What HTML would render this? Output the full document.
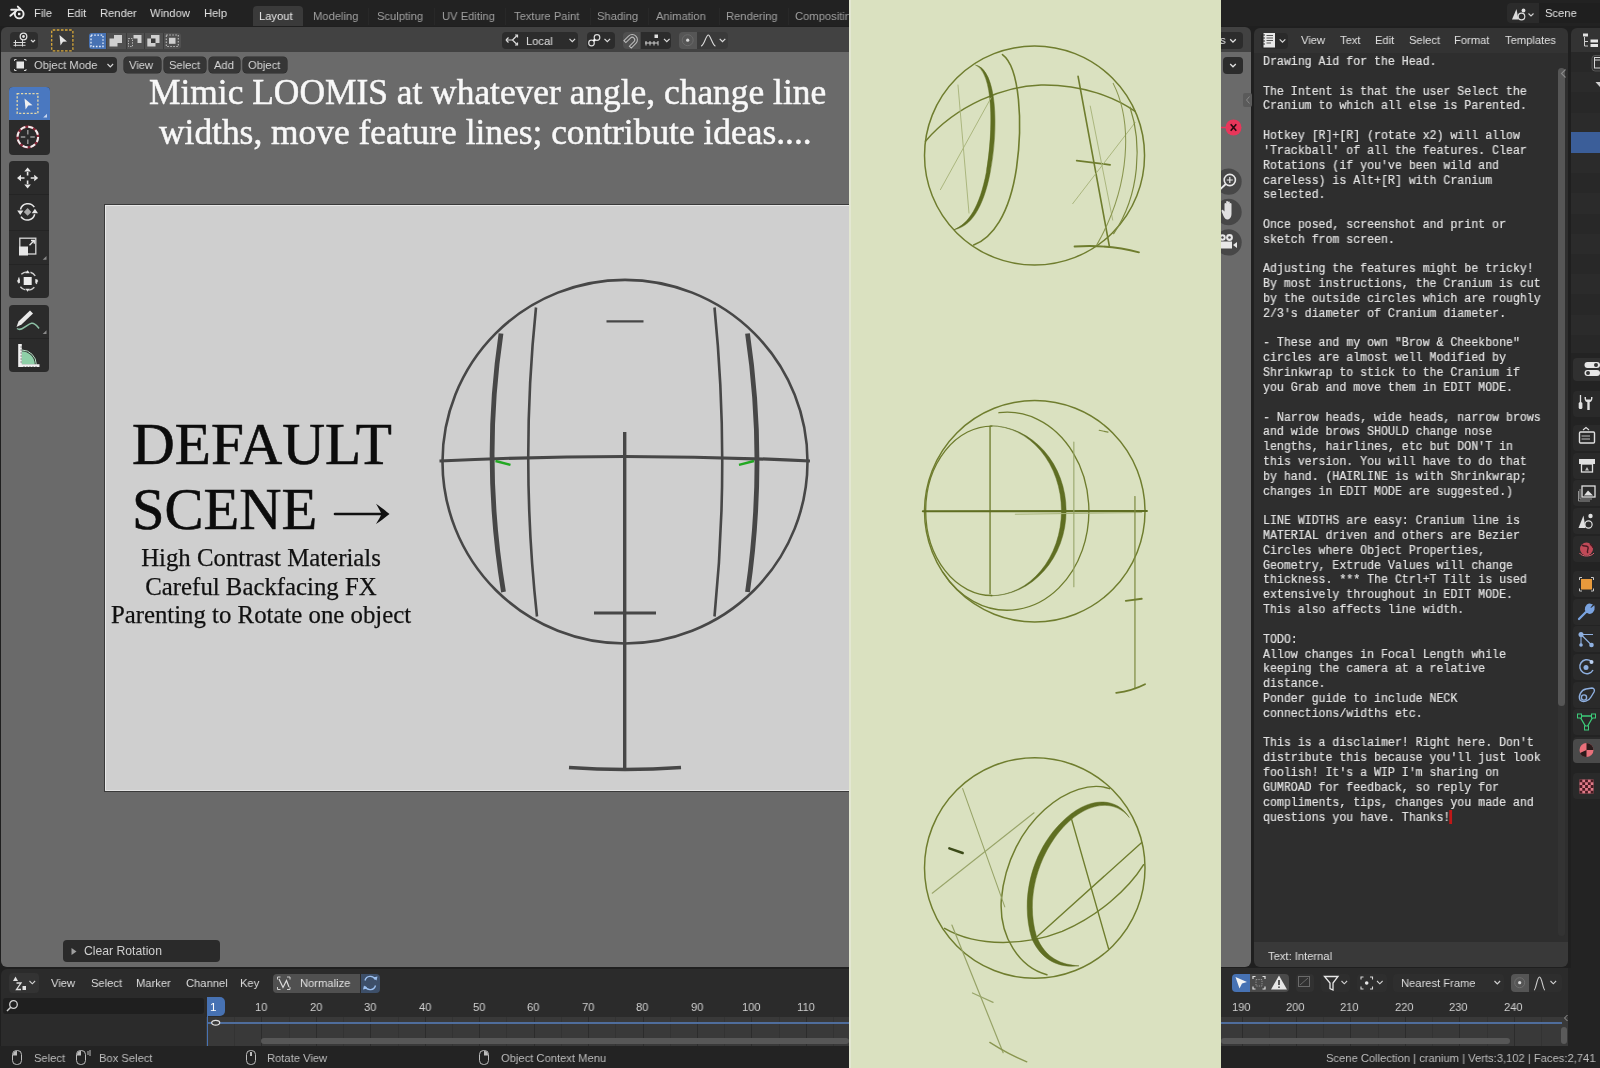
<!DOCTYPE html>
<html><head><meta charset="utf-8">
<style>
*{margin:0;padding:0;box-sizing:border-box}
html,body{width:1600px;height:1068px;overflow:hidden;background:#1f1f1f;font-family:"Liberation Sans",sans-serif;position:relative}
.a{position:absolute}
.t{position:absolute;white-space:pre;will-change:transform;color:#d8d8d8;font-size:11.5px;line-height:14px}
</style></head><body>
<!-- top bar -->
<div class="a" id="topbar" style="left:0;top:0;width:1600px;height:26px;background:#222222"></div>
<svg class="a" style="left:5px;top:2px" width="25" height="20" viewBox="5 2 25 20">
<circle cx="19.2" cy="14" r="4.4" fill="none" stroke="#ececec" stroke-width="1.9"/>
<rect x="18" y="12.8" width="2.4" height="2.4" fill="#ececec"/>
<path d="M11.2 9.7 L19.5 9.5 M17.8 6.6 L20.5 9.2 M10.4 15.8 L15.8 11.3" stroke="#ececec" stroke-width="1.9" stroke-linecap="round" fill="none"/>
</svg>
<div class="t" style="left:34px;top:5.71px;font-size:11.8px;transform:scaleX(0.949);transform-origin:0 0;color:#e2e2e2;">File</div>
<div class="t" style="left:66.5px;top:5.71px;font-size:11.8px;transform:scaleX(0.949);transform-origin:0 0;color:#e2e2e2;">Edit</div>
<div class="t" style="left:100.3px;top:5.71px;font-size:11.8px;transform:scaleX(0.949);transform-origin:0 0;color:#e2e2e2;">Render</div>
<div class="t" style="left:150px;top:5.71px;font-size:11.8px;transform:scaleX(0.949);transform-origin:0 0;color:#e2e2e2;">Window</div>
<div class="t" style="left:204.2px;top:5.71px;font-size:11.8px;transform:scaleX(0.949);transform-origin:0 0;color:#e2e2e2;">Help</div>
<div class="a" style="left:253px;top:6px;width:50px;height:20px;background:#3a3a3a;border-radius:4px 4px 0 0"></div>
<div class="t" style="left:259.3px;top:8.91px;font-size:11.8px;transform:scaleX(0.949);transform-origin:0 0;color:#e8e8e8;">Layout</div>
<div class="t" style="left:312.8px;top:8.91px;font-size:11.8px;transform:scaleX(0.949);transform-origin:0 0;color:#a0a0a0;">Modeling</div>
<div class="t" style="left:377px;top:8.91px;font-size:11.8px;transform:scaleX(0.949);transform-origin:0 0;color:#a0a0a0;">Sculpting</div>
<div class="t" style="left:442px;top:8.91px;font-size:11.8px;transform:scaleX(0.949);transform-origin:0 0;color:#a0a0a0;">UV Editing</div>
<div class="t" style="left:513.8px;top:8.91px;font-size:11.8px;transform:scaleX(0.949);transform-origin:0 0;color:#a0a0a0;">Texture Paint</div>
<div class="t" style="left:597.4px;top:8.91px;font-size:11.8px;transform:scaleX(0.949);transform-origin:0 0;color:#a0a0a0;">Shading</div>
<div class="t" style="left:656px;top:8.91px;font-size:11.8px;transform:scaleX(0.949);transform-origin:0 0;color:#a0a0a0;">Animation</div>
<div class="t" style="left:726.3px;top:8.91px;font-size:11.8px;transform:scaleX(0.949);transform-origin:0 0;color:#a0a0a0;">Rendering</div>
<div class="t" style="left:795.3px;top:8.91px;font-size:11.8px;transform:scaleX(0.949);transform-origin:0 0;color:#a0a0a0;">Compositing</div>
<div class="a" style="left:368px;top:8px;width:1px;height:17px;background:#282828"></div>
<div class="a" style="left:434px;top:8px;width:1px;height:17px;background:#282828"></div>
<div class="a" style="left:504.7px;top:8px;width:1px;height:17px;background:#282828"></div>
<div class="a" style="left:589.7px;top:8px;width:1px;height:17px;background:#282828"></div>
<div class="a" style="left:648px;top:8px;width:1px;height:17px;background:#282828"></div>
<div class="a" style="left:718.5px;top:8px;width:1px;height:17px;background:#282828"></div>
<div class="a" style="left:787.5px;top:8px;width:1px;height:17px;background:#282828"></div>
<div class="a" style="left:1507.4px;top:3px;width:31.60px;height:19.50px;background:#2b2b2b;border-radius:4px 0 0 4px"></div>
<div class="a" style="left:1539.3px;top:3px;width:60.70px;height:19.50px;background:#1f1f1f;"></div>
<div class="t" style="left:1544.5px;top:5.81px;font-size:11.8px;transform:scaleX(0.949);transform-origin:0 0;color:#e6e6e6;">Scene</div>
<svg class="a" style="left:1508px;top:3px" width="32" height="20" viewBox="1508 3 32 20">
<path d="M1512 19.5 L1516.5 9 L1518.5 19.5 Z" fill="#dcdcdc"/>
<circle cx="1523.5" cy="10.5" r="1.9" fill="#dcdcdc"/>
<circle cx="1521.5" cy="16.5" r="3.3" fill="#2b2b2b" stroke="#dcdcdc" stroke-width="1.2"/>
<path d="M1528.5 13.5 L1531 16 L1533.5 13.5" fill="none" stroke="#d0d0d0" stroke-width="1.1"/>
</svg>
<!-- viewport header -->
<div class="a" style="left:1px;top:27px;width:848px;height:25px;background:#424242;border-radius:6px 0 0 0"></div>
<!-- viewport -->
<div class="a" style="left:1px;top:52px;width:848px;height:915px;background:#6a6a6a;border-radius:0 0 0 6px"></div>
<!-- camera frame -->
<div class="a" style="left:104px;top:204px;width:745px;height:588px;background:#cfcfcf;border:1px solid #3a3a3a;border-right:none"></div>

<!-- header items -->
<div class="a" style="left:9.5px;top:32px;width:28.50px;height:16.60px;background:#2e2e2e;border-radius:4px"></div>
<svg class="a" style="left:9px;top:31px" width="30" height="18" viewBox="9 31 30 18">
<circle cx="23.5" cy="36.5" r="3.3" fill="none" stroke="#e0e0e0" stroke-width="1.3"/>
<circle cx="23.5" cy="36.5" r="1.4" fill="#e0e0e0"/>
<path d="M13.5 42.5 H25.5 M15.5 40 V46.5 M22.5 40 V46.5 M13.5 45.3 H25.5" stroke="#d8d8d8" stroke-width="1"/>
<path d="M31 40 L33 42 L35 40" fill="none" stroke="#d8d8d8" stroke-width="1.2"/>
</svg>
<div class="a" style="left:51px;top:29.3px;width:22.60px;height:22.20px;background:#3a3a3a;border-radius:2px"></div>
<svg class="a" style="left:50px;top:28px" width="25" height="25" viewBox="50 28 25 25">
<rect x="51.7" y="30" width="21.2" height="20.8" fill="none" stroke="#d9a93a" stroke-width="1.3" stroke-dasharray="2.6 1.5" rx="1"/>
<path d="M59.5 35 L67 41.5 L63 41.8 L60.5 45.5 Z" fill="#e8e8e8"/>
</svg>
<div class="a" style="left:88.5px;top:32.5px;width:17.20px;height:16.70px;background:#4772b3;border-radius:3px 0 0 3px"></div>
<div class="a" style="left:106.5px;top:32.5px;width:74.50px;height:16.70px;background:#505050;border-radius:0 3px 3px 0"></div>
<div class="a" style="left:125.5px;top:32.5px;width:0.80px;height:16.70px;background:#3c3c3c;"></div>
<div class="a" style="left:144px;top:32.5px;width:0.80px;height:16.70px;background:#3c3c3c;"></div>
<div class="a" style="left:163px;top:32.5px;width:0.80px;height:16.70px;background:#3c3c3c;"></div>
<svg class="a" style="left:88px;top:32px" width="94" height="18" viewBox="88 32 94 18">
<rect x="91" y="35.2" width="12" height="11.3" fill="none" stroke="#e6eefc" stroke-width="1.3" stroke-dasharray="1.6 1.6"/>
<path d="M109.5 38.5 H114 V35 H122 V43 H117.5 V46.5 H109.5 Z" fill="#cfcfcf"/>
<path d="M128.5 38.5 H132.5 V46.5 H128.5 Z" fill="none" stroke="#bdbdbd" stroke-width="1" stroke-dasharray="1.3 1.3"/>
<path d="M133.5 35 H141.5 V43 H137.5 V38.5 H133.5 Z" fill="#d0d0d0"/>
<path d="M147.3 38.5 H151 V35 H159.5 V43 H155.5 V46.5 H147.3 Z" fill="#cfcfcf"/>
<rect x="151" y="38.5" width="4.5" height="4.5" fill="#3a3a3a"/>
<rect x="166.3" y="35" width="12" height="11.5" fill="none" stroke="#bdbdbd" stroke-width="1.1" stroke-dasharray="1.5 1.5"/>
<rect x="169" y="37.8" width="6.5" height="6" fill="#cfcfcf"/>
</svg>
<div class="a" style="left:501.7px;top:32px;width:76.60px;height:16.50px;background:#2c2c2c;border-radius:4px"></div>
<div class="t" style="left:526px;top:33.71px;font-size:11.8px;transform:scaleX(0.949);transform-origin:0 0;color:#e0e0e0;">Local</div>

<div class="a" style="left:586.5px;top:32px;width:28.50px;height:16.50px;background:#2c2c2c;border-radius:4px"></div>
<div class="a" style="left:623.2px;top:32px;width:17.30px;height:16.50px;background:#4f4f4f;border-radius:4px 0 0 4px"></div>
<div class="a" style="left:641.2px;top:32px;width:30.10px;height:16.50px;background:#2c2c2c;border-radius:0 4px 4px 0"></div>
<div class="a" style="left:678.8px;top:32px;width:18.00px;height:16.50px;background:#565656;border-radius:4px 0 0 4px"></div>
<div class="a" style="left:697px;top:32px;width:31.20px;height:16.50px;background:#3a3a3a;border-radius:0 4px 4px 0"></div>
<svg class="a" style="left:500px;top:31px" width="232" height="19" viewBox="500 31 232 19">
<g fill="none" stroke="#dcdcdc" stroke-width="1.2">
<path d="M506 40 L512.5 40 M512.5 40 L517 35.5 M512.5 40 L517 44.5"/>
<path d="M506 40 L508.5 37.5 M506 40 L508.5 42.5"/>
<path d="M515 35 H517.5 V37.5 M515 45 H517.5 V42.5"/>
<path d="M569.5 38.8 L572.3 41.6 L575.1 38.8"/>
<circle cx="591.5" cy="43" r="2.8"/><circle cx="597" cy="37.5" r="2.8"/>
<path d="M604.5 38.8 L607.3 41.6 L610.1 38.8"/>
<g transform="rotate(45 631.5 40.5)"><path d="M626.3 46 V39.5 A5.2 5.2 0 0 1 636.7 39.5 V46 H634 V39.5 A2.5 2.5 0 0 0 629 39.5 V46 Z" fill="none" stroke="#bdbdbd" stroke-width="1"/></g>
<path d="M664 38.8 L666.8 41.6 L669.6 38.8"/>
<path d="M719.7 38.8 L722.5 41.6 L725.3 38.8"/>
<path d="M701 46 C 704 46 706 35 708.3 35 C 710.6 35 712.6 46 715.5 46" stroke-width="1.1"/>
</g>
<circle cx="594.3" cy="40.2" r="1.2" fill="#ffffff"/>
<path d="M645 43 H658 M646 41 V45.5 M650 41 V45.5 M654 41 V45.5 M658 41 V45.5" stroke="#cfcfcf" stroke-width="1"/>
<rect x="654.5" y="34.5" width="3.5" height="3.5" fill="#e0e0e0"/>
<circle cx="687.7" cy="40.2" r="5.5" fill="none" stroke="#6a6a6a" stroke-width="1"/>
<circle cx="687.7" cy="40.2" r="1.6" fill="#d8d8d8"/>
</svg>
<div class="a" style="left:9.7px;top:57px;width:106.90px;height:16.40px;background:#2c2c2c;border-radius:4px"></div>
<svg class="a" style="left:12px;top:58px" width="110" height="15" viewBox="12 58 110 15">
<path d="M14.5 61 V59.5 H16.5 M24 59.5 H26 V61 M26 69 V70.5 H24 M16.5 70.5 H14.5 V69" fill="none" stroke="#cfcfcf" stroke-width="1"/>
<rect x="16.5" y="61.5" width="7.5" height="7" fill="#e6e6e6"/>
<path d="M107.5 64 L110.3 66.8 L113.1 64" fill="none" stroke="#d8d8d8" stroke-width="1.2"/>
</svg>
<div class="t" style="left:34px;top:57.99px;font-size:11.8px;transform:scaleX(0.949);transform-origin:0 0;color:#d8d8d8;">Object Mode</div>
<div class="a" style="left:124px;top:57px;width:36.70px;height:16.40px;background:#363636;box-shadow:0 0 0 0.6px #2a2a2a;border-radius:4px"></div>
<div class="t" style="left:129px;top:57.99px;font-size:11.8px;transform:scaleX(0.949);transform-origin:0 0;color:#d8d8d8;">View</div>
<div class="a" style="left:163.5px;top:57px;width:42.80px;height:16.40px;background:#363636;box-shadow:0 0 0 0.6px #2a2a2a;border-radius:4px"></div>
<div class="t" style="left:168.5px;top:57.99px;font-size:11.8px;transform:scaleX(0.949);transform-origin:0 0;color:#d8d8d8;">Select</div>
<div class="a" style="left:209px;top:57px;width:31.00px;height:16.40px;background:#363636;box-shadow:0 0 0 0.6px #2a2a2a;border-radius:4px"></div>
<div class="t" style="left:214px;top:57.99px;font-size:11.8px;transform:scaleX(0.949);transform-origin:0 0;color:#d8d8d8;">Add</div>
<div class="a" style="left:242.8px;top:57px;width:44.50px;height:16.40px;background:#363636;box-shadow:0 0 0 0.6px #2a2a2a;border-radius:4px"></div>
<div class="t" style="left:247.5px;top:57.99px;font-size:11.8px;transform:scaleX(0.949);transform-origin:0 0;color:#d8d8d8;">Object</div>
<!-- left toolbar -->
<div class="a" style="left:8.6px;top:86.5px;width:41px;height:68px;background:#2b2b2b;border-radius:4px"></div>
<div class="a" style="left:8.6px;top:86.5px;width:41px;height:33px;background:#4a78c0;border-radius:4px 4px 0 0"></div>
<div class="a" style="left:9px;top:161px;width:40px;height:137px;background:#2b2b2b;border-radius:4px"></div>
<div class="a" style="left:9px;top:194px;width:40px;height:1px;background:#242424"></div>
<div class="a" style="left:9px;top:229.5px;width:40px;height:1px;background:#242424"></div>
<div class="a" style="left:9px;top:264px;width:40px;height:1px;background:#242424"></div>
<div class="a" style="left:9px;top:304.5px;width:40px;height:67.5px;background:#2b2b2b;border-radius:4px"></div>
<div class="a" style="left:9px;top:337.5px;width:40px;height:1px;background:#242424"></div>
<svg class="a" style="left:0;top:80px" width="60" height="300" viewBox="0 80 60 300">
<!-- select box -->
<rect x="17.2" y="93.7" width="20.7" height="19.7" fill="none" stroke="#e6d9a8" stroke-width="1.3" stroke-dasharray="2.2 1.6"/>
<path d="M24.5 98.5 L32.5 105.3 L28.2 105.6 L25.6 109.5 Z" fill="#f0f0f0"/>
<path d="M43.2 117.5 L47 117.5 L47 113.7 Z" fill="#c8d6ee"/>
<!-- cursor -->
<circle cx="27.8" cy="137" r="10.3" fill="none" stroke="#8a2a3a" stroke-width="2.3"/>
<circle cx="27.8" cy="137" r="10.3" fill="none" stroke="#f0f0f0" stroke-width="2" stroke-dasharray="5.2 2.9"/>
<g stroke="#9a9a9a" stroke-width="1.4"><path d="M27.8 130 V134.5 M27.8 139.5 V144 M20.8 137 H25.3 M30.3 137 H34.8"/></g>
<!-- move -->
<g fill="#e6e6e6">
<path d="M27.6 167.5 L24.3 171.5 L30.9 171.5 Z M27.6 188.5 L24.3 184.5 L30.9 184.5 Z M17 178 L21 174.7 L21 181.3 Z M38.2 178 L34.2 174.7 L34.2 181.3 Z"/>
</g>
<g stroke="#e6e6e6" stroke-width="1.6"><path d="M27.6 172 V175.5 M27.6 180.5 V184 M21 178 H24.5 M30.7 178 H34.2"/></g>
<!-- rotate -->
<path d="M20.5 209.5 A 7.6 7.6 0 0 1 34.3 207.2" fill="none" stroke="#e6e6e6" stroke-width="1.5"/>
<path d="M34.7 214.3 A 7.6 7.6 0 0 1 21 216.6" fill="none" stroke="#e6e6e6" stroke-width="1.5"/>
<path d="M17.2 210.5 L23.4 210.5 L20.3 215 Z M31.8 213.2 L38 213.2 L34.9 208.7 Z" fill="#e6e6e6"/>
<path d="M27.6 208 L31.4 211.9 L27.6 215.8 L23.8 211.9 Z" fill="#a8a8a8"/>
<!-- scale -->
<rect x="19.8" y="238.2" width="16" height="15.8" fill="none" stroke="#d8d8d8" stroke-width="1.3"/>
<rect x="19" y="246.5" width="9" height="9" fill="#e6e6e6"/>
<path d="M29.5 245.3 L34 240.8 M31 240.5 H34.3 V243.8" fill="none" stroke="#e6e6e6" stroke-width="1.3"/>
<path d="M42.7 259.7 L46.5 259.7 L46.5 255.9 Z" fill="#8a8a8a"/>
<!-- transform -->
<circle cx="27.6" cy="281" r="9.2" fill="none" stroke="#cfcfcf" stroke-width="1.4" stroke-dasharray="6 3.8" stroke-dashoffset="3"/>
<rect x="23.7" y="277" width="8" height="8" fill="#ececec"/>
<path d="M27.6 270.2 L25.3 273.3 L29.9 273.3 Z M27.6 291.8 L25.3 288.7 L29.9 288.7 Z M16.8 281 L19.9 278.7 L19.9 283.3 Z M38.4 281 L35.3 278.7 L35.3 283.3 Z" fill="#e6e6e6"/>
<!-- annotate -->
<path d="M16.5 327 L18.5 321.5 L30 310.5 L33 313.5 L21.5 324.5 Z" fill="#eaeaea"/>
<path d="M17 328.5 C 22 332 27 324 31.5 323.3 C 35 322.7 37 326 39 328.5" fill="none" stroke="#8dc0a5" stroke-width="1.5"/>
<path d="M42.7 334 L46.5 334 L46.5 330.2 Z" fill="#8a8a8a"/>
<!-- measure -->
<path d="M21.5 364.5 L21.5 351.2 A 13.3 13.3 0 0 1 34.8 364.5 Z" fill="#8fd0a8"/>
<path d="M21.8 350 A 14.5 14.5 0 0 1 36.3 364.5" fill="none" stroke="#b8e0c6" stroke-width="1"/>
<path d="M18.2 344 H21.8 V364.2 H39.5 V367 H18.2 Z" fill="#f0f0f0"/>
<g stroke="#2b2b2b" stroke-width="0.6"><path d="M20.4 347 H21.8 M20.4 350 H21.8 M20.4 353 H21.8 M20.4 356 H21.8 M20.4 359 H21.8 M20.4 362 H21.8 M24 366 V367 M27 366 V367 M30 366 V367 M33 366 V367 M36 366 V367"/></g>
</svg>

<!-- big title text -->
<div class="a" style="left:0;top:52px;width:849px;height:120px;overflow:hidden">
<div class="t" style="left:148.5px;top:20.3px;font-family:'Liberation Serif',serif;font-size:35.4px;line-height:40px;color:#f8f8f8;-webkit-text-stroke:0.5px #f8f8f8">Mimic LOOMIS at whatever angle, change line</div>
<div class="t" style="left:159px;top:60px;font-family:'Liberation Serif',serif;font-size:35.4px;line-height:40px;color:#f8f8f8;-webkit-text-stroke:0.5px #f8f8f8">widths, move feature lines; contribute ideas....</div>
</div>
<!-- camera inner -->
<div class="a" style="left:105px;top:205px;width:744px;height:1px;background:#e8e8e8"></div>
<div class="a" style="left:105px;top:205px;width:1px;height:585px;background:#e8e8e8"></div>
<div class="a" style="left:105px;top:790px;width:744px;height:1px;background:#e4e4e4"></div>
<div class="t" style="left:132px;top:411px;font-family:'Liberation Serif',serif;font-size:59.2px;line-height:66px;color:#0c0c0c;-webkit-text-stroke:0.6px #0c0c0c">DEFAULT</div>
<div class="t" style="left:132px;top:477px;font-family:'Liberation Serif',serif;font-size:58.5px;line-height:66px;color:#0c0c0c;-webkit-text-stroke:0.6px #0c0c0c">SCENE</div>
<div class="t" style="left:110px;top:543.5px;width:302px;text-align:center;font-family:'Liberation Serif',serif;font-size:24.8px;line-height:28.5px;color:#111;-webkit-text-stroke:0.25px #111">High Contrast Materials
Careful Backfacing FX
Parenting to Rotate one object</div>
<svg class="a" style="left:0;top:0" width="849" height="968" viewBox="0 0 849 968">
<g fill="none" stroke="#474747" stroke-linecap="butt">
<ellipse cx="625" cy="461.7" rx="182.5" ry="181.8" stroke-width="2.6"/>
<path d="M439.5 461 Q625 452 810 461" stroke-width="3.2"/>
<path d="M624.7 432 L624.7 769" stroke-width="3.4"/>
<path d="M569 767.5 Q625 771.5 681 767.5" stroke-width="3.6"/>
<path d="M594 613 L656 613" stroke-width="3"/>
<path d="M606.5 321.3 L643.5 321.3" stroke-width="2.2"/>
<path d="M501 333.5 Q482 462 503.5 592" stroke-width="4.8"/>
<path d="M536 307.5 Q520 462 537 616.5" stroke-width="2.6"/>
<path d="M714.5 307.5 Q730 462 714.5 616.5" stroke-width="2.6"/>
<path d="M747.5 333.5 Q766.5 462 747.5 592" stroke-width="4.8"/>
</g>
<path d="M335 514 L383 514" stroke="#111" stroke-width="2.6" stroke-linecap="round"/>
<path d="M389.5 514 C384 509.5 380 506.5 376 503.8 C378.5 508 380.5 511.5 381.5 514 C380.5 516.5 378.5 520 376 524 C380 521.5 384 518.5 389.5 514 Z" fill="#111"/>
<g stroke="#22a822" stroke-width="2.4" fill="none">
<path d="M495.5 461 L510.5 464.8"/>
<path d="M739 464.8 L754 461"/>
</g>
</svg>

<!-- green sketch panel -->
<div class="a" style="left:849px;top:0;width:372px;height:1068px;background:#dae1c0"></div>

<svg class="a" style="left:849px;top:0" width="372" height="1068" viewBox="849 0 372 1068">
<g fill="none" stroke-linecap="round">
<!-- sketch 1 -->
<g transform="translate(910 30) scale(0.23408)">
<ellipse cx="532" cy="536" rx="470" ry="468" stroke="#6f7d2e" stroke-width="6.32"/>
<path d="M66 475 C 200 320 400 240 560 235 C 740 232 880 290 962 348" stroke="#6f7d2e" stroke-width="6.32"/>
<path d="M281 150 C 372 168 380 420 342 612 C 312 762 260 840 188 853 C 250 828 298 755 326 608 C 358 420 356 182 281 150 Z" fill="#5f6e22" stroke="#5f6e22" stroke-width="2"/>
<path d="M395 105 C 470 160 482 400 455 590 C 425 790 350 890 272 918" stroke="#6f7d2e" stroke-width="6.90"/>
<path d="M205 235 L252 782" stroke="#a7b37a" stroke-width="4.02"/>
<path d="M130 682 L346 290" stroke="#a7b37a" stroke-width="4.02"/>
<path d="M718 198 L852 925" stroke="#6f7d2e" stroke-width="6.90"/>
<path d="M712 558 L855 576" stroke="#6f7d2e" stroke-width="6.90"/>
<path d="M703 925 Q 850 915 978 950" stroke="#6f7d2e" stroke-width="8.05"/>
<path d="M770 325 L866 812" stroke="#a7b37a" stroke-width="4.02"/>
<path d="M695 742 L962 395" stroke="#a7b37a" stroke-width="4.02"/>
<path d="M868 228 C 950 390 945 660 798 918" stroke="#8a9650" stroke-width="4.60"/>
<path d="M940 330 C 990 480 985 700 870 870" stroke="#7d8a40" stroke-width="5.17"/>
</g>
<!-- sketch 2 -->
<g transform="translate(910 390) scale(0.23408)">
<ellipse cx="533" cy="518" rx="471" ry="473" stroke="#6f7d2e" stroke-width="6.32"/>
<path d="M380 97 A 349 423 0 1 1 140 778" stroke="#6f7d2e" stroke-width="5.75"/>
<path d="M350 154 A 283 362 0 0 0 350 878" stroke="#6f7d2e" stroke-width="5.75"/>
<path d="M345 153 A 322 363 0 0 1 345 879 A 302 363 0 0 0 345 153 Z" fill="#5f6e22" stroke="#5f6e22" stroke-width="2"/>
<path d="M342 155 L342 870" stroke="#6f7d2e" stroke-width="5.75"/>
<path d="M55 518 L1012 517" stroke="#5f6e22" stroke-width="9.20"/>
<path d="M450 531 L990 523" stroke="#a7b37a" stroke-width="4.60"/>
<path d="M700 222 L700 840" stroke="#98a468" stroke-width="4.60"/>
<path d="M961 455 L961 1276" stroke="#7d8a40" stroke-width="5.17"/>
<path d="M922 901 L990 892" stroke="#6f7d2e" stroke-width="8.05"/>
<path d="M881 1294 Q 950 1285 1004 1257" stroke="#6f7d2e" stroke-width="8.05"/>
<path d="M808 172 L846 180" stroke="#7d8a40" stroke-width="4.60"/>
</g>
<!-- sketch 3 -->
<g transform="translate(910 750) scale(0.23408)">
<ellipse cx="533" cy="504" rx="471" ry="471" stroke="#6f7d2e" stroke-width="6.32"/>
<path d="M148 762 C 290 845 500 835 650 775 C 800 710 930 600 998 490" stroke="#6f7d2e" stroke-width="6.32"/>
<path d="M852 165 C 700 110 420 300 390 640 C 380 800 470 930 585 960" stroke="#6f7d2e" stroke-width="6.32"/>
<path d="M936 287 C 880 196 755 196 642 314 C 518 440 470 640 520 805 C 565 908 650 932 722 922 C 650 918 578 892 540 795 C 494 640 542 452 658 326 C 766 214 878 214 936 287 Z" fill="#5f6e22" stroke="#5f6e22" stroke-width="2"/>
<path d="M540 800 L990 395" stroke="#6f7d2e" stroke-width="5.75"/>
<path d="M690 295 L848 848" stroke="#6f7d2e" stroke-width="5.75"/>
<path d="M225 165 L405 670" stroke="#98a468" stroke-width="4.60"/>
<path d="M95 612 L530 268" stroke="#98a468" stroke-width="4.60"/>
<path d="M168 420 L225 440" stroke="#3c4a18" stroke-width="10.35"/>
<path d="M179 748 L398 1293" stroke="#98a468" stroke-width="5.17"/>
<path d="M267 1038 L355 1078" stroke="#98a468" stroke-width="5.17"/>
<path d="M341 1249 Q 420 1300 499 1332" stroke="#8a9650" stroke-width="5.75"/>
</g>
</g>
</svg>

<div class="a" style="left:849px;top:0;width:2px;height:1068px;background:#e3e7d2"></div>
<!-- right strip (viewport continuation) -->
<div class="a" style="left:1221px;top:27px;width:30.00px;height:25.00px;background:#424242;border-radius:0 6px 0 0"></div>
<div class="a" style="left:1221px;top:52px;width:30.00px;height:915.00px;background:#6a6a6a;border-radius:0 0 6px 0"></div>
<div class="a" style="left:1221px;top:32.4px;width:22.00px;height:16.80px;background:#2c2c2c;border-radius:0 4px 4px 0"></div>
<div class="a" style="left:1221px;top:30px;width:22px;height:18px;overflow:hidden"><div class="t" style="left:-1.5px;top:3.29px;font-size:11.8px;transform:scaleX(0.949);transform-origin:0 0;color:#e0e0e0">s</div></div>
<div class="a" style="left:1223px;top:57px;width:20.00px;height:17.00px;background:#2c2c2c;border-radius:4px"></div>
<svg class="a" style="left:1221px;top:30px" width="32" height="230" viewBox="1221 30 32 230">
<path d="M1230.2 39.3 L1233 42.1 L1235.8 39.3" fill="none" stroke="#e0e0e0" stroke-width="1.3"/>
<path d="M1230.2 64 L1233 66.8 L1235.8 64" fill="none" stroke="#e0e0e0" stroke-width="1.3"/>
<rect x="1243" y="93" width="9" height="14" rx="2" fill="#5a5a5a"/>
<path d="M1249.5 96.5 L1246.5 100 L1249.5 103.5" fill="none" stroke="#8a8a8a" stroke-width="1"/>
<path d="M1221 127.5 H1226" stroke="#e8365a" stroke-width="1.5"/>
<circle cx="1233.5" cy="127.5" r="8" fill="#e8365a"/>
<path d="M1230.7 124.2 L1236.3 130.8 M1236.3 124.2 L1230.7 130.8" stroke="#2a0a10" stroke-width="1.6"/>
<g>
<circle cx="1228.5" cy="181.6" r="13.2" fill="#474747"/>
<circle cx="1228.5" cy="212" r="13.2" fill="#474747"/>
<circle cx="1228.5" cy="242.4" r="13.2" fill="#474747"/>
<circle cx="1229.8" cy="180" r="5.6" fill="none" stroke="#e8e8e8" stroke-width="1.6"/>
<path d="M1229.8 177 V183 M1226.8 180 H1232.8" stroke="#e8e8e8" stroke-width="1.2"/>
<path d="M1225.8 184 L1220 189.5" stroke="#e8e8e8" stroke-width="1.8"/>
<path d="M1222.5 213.5 C 1221 211 1221.5 209 1223 210 L1224.5 211.5 V204 C 1224.5 202.7 1226.2 202.7 1226.2 204 V209.5 V202 C 1226.2 200.7 1228 200.7 1228 202 V209.5 V202.5 C 1228 201.2 1229.8 201.2 1229.8 202.5 V209.5 V204 C 1229.8 202.7 1231.5 202.7 1231.5 204 V213.5 C 1231.5 217.5 1229.5 219.5 1227 219.5 C 1225 219.5 1223.8 217 1222.5 213.5 Z" fill="#e0e0e0"/>
<circle cx="1222.5" cy="237.5" r="3.2" fill="#e8e8e8"/><circle cx="1229.5" cy="237.5" r="3.4" fill="#e8e8e8"/>
<rect x="1220" y="241.5" width="12" height="7" fill="#e8e8e8"/>
<path d="M1233 245 L1237 242 V248 Z" fill="#e8e8e8"/>
<circle cx="1222.5" cy="237.5" r="1.2" fill="#474747"/><circle cx="1229.5" cy="237.5" r="1.3" fill="#474747"/>
</g></svg>
<!-- text editor -->
<div class="a" style="left:1254px;top:28px;width:314.00px;height:25.00px;background:#333333;border-radius:6px 6px 0 0"></div>
<div class="a" style="left:1254px;top:53px;width:314.00px;height:889.00px;background:#2e2e2e;"></div>
<div class="a" style="left:1254px;top:942px;width:314.00px;height:25.00px;background:#393939;border-radius:0 0 6px 6px"></div>
<div class="a" style="left:1558px;top:68px;width:7px;height:868px;background:#333333;border-radius:3.5px"></div>
<div class="a" style="left:1558px;top:68px;width:7.00px;height:638.00px;background:#565656;border-radius:3.5px"></div>
<div class="a" style="left:1260.5px;top:32.5px;width:27.50px;height:16.00px;background:#2a2a2a;border-radius:4px"></div>
<svg class="a" style="left:1260px;top:31px" width="30" height="20" viewBox="1260 31 30 20">
<rect x="1263.5" y="33" width="11.5" height="14.5" fill="#e8e8e8"/>
<path d="M1266.5 35.5 H1273 M1266.5 38 H1273 M1266.5 40.5 H1273 M1266.5 43 H1271" stroke="#555" stroke-width="1"/>
<path d="M1263 35 H1265 M1263 38 H1265 M1263 41 H1265 M1263 44 H1265" stroke="#333" stroke-width="1"/>
<path d="M1279.7 39.3 L1282.5 42.1 L1285.3 39.3" fill="none" stroke="#d8d8d8" stroke-width="1.2"/>
</svg>
<div class="t" style="left:1300.5px;top:33.11px;font-size:11.8px;transform:scaleX(0.949);transform-origin:0 0;color:#e0e0e0;">View</div>
<div class="t" style="left:1340.3px;top:33.11px;font-size:11.8px;transform:scaleX(0.949);transform-origin:0 0;color:#e0e0e0;">Text</div>
<div class="t" style="left:1375.3px;top:33.11px;font-size:11.8px;transform:scaleX(0.949);transform-origin:0 0;color:#e0e0e0;">Edit</div>
<div class="t" style="left:1409px;top:33.11px;font-size:11.8px;transform:scaleX(0.949);transform-origin:0 0;color:#e0e0e0;">Select</div>
<div class="t" style="left:1454px;top:33.11px;font-size:11.8px;transform:scaleX(0.949);transform-origin:0 0;color:#e0e0e0;">Format</div>
<div class="t" style="left:1505.3px;top:33.11px;font-size:11.8px;transform:scaleX(0.949);transform-origin:0 0;color:#e0e0e0;">Templates</div>
<div class="t" style="left:1268px;top:949.41px;font-size:11.8px;transform:scaleX(0.949);transform-origin:0 0;color:#e0e0e0;">Text: Internal</div>
<svg class="a" style="left:1556px;top:66px" width="12" height="16"><path d="M9.5 3.5 L5.5 7.5 L9.5 11.5" fill="none" stroke="#8a8a8a" stroke-width="1.1"/></svg>
<div class="t" id="textbody" style="left:1262.5px;top:54.7px;font-family:'Liberation Mono',monospace;font-size:12.3px;line-height:14.82px;color:#e2e2e2;transform:scaleX(0.9407);transform-origin:0 0;-webkit-text-stroke:0.2px #e2e2e2">Drawing Aid for the Head.

The Intent is that the user Select the
Cranium to which all else is Parented.

Hotkey [R]+[R] (rotate x2) will allow
'Trackball' of all the features. Clear
Rotations (if you've been wild and
careless) is Alt+[R] with Cranium
selected.

Once posed, screenshot and print or
sketch from screen.

Adjusting the features might be tricky!
By most instructions, the Cranium is cut
by the outside circles which are roughly
2/3's diameter of Cranium diameter.

- These and my own "Brow &amp; Cheekbone"
circles are almost well Modified by
Shrinkwrap to stick to the Cranium if
you Grab and move them in EDIT MODE.

- Narrow heads, wide heads, narrow brows
and wide brows SHOULD change nose
lengths, hairlines, etc but DON'T in
this version. You will have to do that
by hand. (HAIRLINE is with Shrinkwrap;
changes in EDIT MODE are suggested.)

LINE WIDTHS are easy: Cranium line is
MATERIAL driven and others are Bezier
Circles where Object Properties,
Geometry, Extrude Values will change
thickness. *** The Ctrl+T Tilt is used
extensively throughout in EDIT MODE.
This also affects line width.

TODO:
Allow changes in Focal Length while
keeping the camera at a relative
distance.
Ponder guide to include NECK
connections/widths etc.

This is a disclaimer! Right here. Don't
distribute this because you'll just look
foolish! It's a WIP I'm sharing on
GUMROAD for feedback, so reply for
compliments, tips, changes you made and
questions you have. Thanks!<span style="display:inline-block;width:3px;height:14px;background:#c01818;vertical-align:-3px;margin-left:-1px"></span></div>
<!-- properties column -->
<div class="a" style="left:1571px;top:28px;width:29.00px;height:24.00px;background:#333333;border-radius:6px 0 0 0"></div>
<div class="a" style="left:1571px;top:52px;width:29.00px;height:301.00px;background:#282828;"></div>
<div class="a" style="left:1571px;top:72.2px;width:29.00px;height:20.20px;background:#2b2b2b;"></div>
<div class="a" style="left:1571px;top:112.6px;width:29.00px;height:20.20px;background:#2b2b2b;"></div>
<div class="a" style="left:1571px;top:153.0px;width:29.00px;height:20.20px;background:#2b2b2b;"></div>
<div class="a" style="left:1571px;top:193.4px;width:29.00px;height:20.20px;background:#2b2b2b;"></div>
<div class="a" style="left:1571px;top:233.79999999999998px;width:29.00px;height:20.20px;background:#2b2b2b;"></div>
<div class="a" style="left:1571px;top:274.2px;width:29.00px;height:20.20px;background:#2b2b2b;"></div>
<div class="a" style="left:1571px;top:314.59999999999997px;width:29.00px;height:20.20px;background:#2b2b2b;"></div>
<div class="a" style="left:1571px;top:132px;width:29.00px;height:21.20px;background:#3b5e99;"></div>
<div class="a" style="left:1571px;top:353px;width:29.00px;height:615.00px;background:#232323;"></div>
<div class="a" style="left:1572.5px;top:357.5px;width:27.50px;height:23.70px;background:#303030;border-radius:4px 0 0 4px"></div>
<div class="a" style="left:1572.5px;top:390.8px;width:27.50px;height:26.00px;background:#2a2a2a;border-radius:4px 0 0 4px"></div>
<div class="a" style="left:1572.5px;top:424.8px;width:27.50px;height:26.00px;background:#2a2a2a;border-radius:4px 0 0 4px"></div>
<div class="a" style="left:1572.5px;top:452.6px;width:27.50px;height:26.00px;background:#2a2a2a;border-radius:4px 0 0 4px"></div>
<div class="a" style="left:1572.5px;top:480.4px;width:27.50px;height:26.00px;background:#2a2a2a;border-radius:4px 0 0 4px"></div>
<div class="a" style="left:1572.5px;top:508px;width:27.50px;height:26.00px;background:#2a2a2a;border-radius:4px 0 0 4px"></div>
<div class="a" style="left:1572.5px;top:536px;width:27.50px;height:26.00px;background:#2a2a2a;border-radius:4px 0 0 4px"></div>
<div class="a" style="left:1572.5px;top:571.3px;width:27.50px;height:26.00px;background:#2a2a2a;border-radius:4px 0 0 4px"></div>
<div class="a" style="left:1572.5px;top:599.3px;width:27.50px;height:26.00px;background:#2a2a2a;border-radius:4px 0 0 4px"></div>
<div class="a" style="left:1572.5px;top:626px;width:27.50px;height:26.00px;background:#2a2a2a;border-radius:4px 0 0 4px"></div>
<div class="a" style="left:1572.5px;top:654px;width:27.50px;height:26.00px;background:#2a2a2a;border-radius:4px 0 0 4px"></div>
<div class="a" style="left:1572.5px;top:682px;width:27.50px;height:26.00px;background:#2a2a2a;border-radius:4px 0 0 4px"></div>
<div class="a" style="left:1572.5px;top:709px;width:27.50px;height:26.00px;background:#2a2a2a;border-radius:4px 0 0 4px"></div>
<div class="a" style="left:1572.5px;top:737px;width:27.50px;height:26.00px;background:#2a2a2a;border-radius:4px 0 0 4px"></div>
<div class="a" style="left:1572.5px;top:773.4px;width:27.50px;height:26.00px;background:#2a2a2a;border-radius:4px 0 0 4px"></div>
<div class="a" style="left:1572.5px;top:739px;width:27.50px;height:24.00px;background:#4a4a4a;border-radius:4px 0 0 4px"></div>
<svg class="a" style="left:1571px;top:28px" width="29" height="780" viewBox="1571 28 29 780">
<rect x="1583" y="33.5" width="5" height="3" fill="#e0e0e0"/>
<path d="M1584.5 37 V46 H1588 M1584.5 41.5 H1588" fill="none" stroke="#cfcfcf" stroke-width="1"/>
<rect x="1590.5" y="39.5" width="7.5" height="3" fill="#e8e8e8"/><rect x="1590.5" y="44" width="7.5" height="3" fill="#e8e8e8"/>
<rect x="1592" y="55.5" width="12" height="15.5" rx="3" fill="#303030" stroke="#555" stroke-width="1"/>
<rect x="1594.5" y="57.5" width="8" height="10.5" fill="none" stroke="#d8d8d8" stroke-width="1"/><path d="M1594.5 60 H1603" stroke="#d8d8d8" stroke-width="1"/>
<path d="M1595.5 82 L1600 82 L1600 87 Z" fill="#cfcfcf"/>
<!-- toggle icon -->
<rect x="1584.5" y="362" width="15.5" height="6" rx="3" fill="#e6e6e6"/>
<rect x="1584.5" y="370" width="15.5" height="6" rx="3" fill="#e6e6e6"/>
<circle cx="1596" cy="365" r="2" fill="#333"/><circle cx="1588" cy="373" r="2" fill="#333"/>
<!-- tool -->
<path d="M1580.5 395 V402" stroke="#e0e0e0" stroke-width="1.3"/>
<rect x="1578.7" y="402" width="3.7" height="7" rx="1.5" fill="#e0e0e0"/>
<path d="M1584.5 397 C1584.5 401 1586 402 1587.3 402 V410 H1589.7 V402 C1591 402 1592.5 401 1592.5 397 L1591 397 V399.5 H1586 V397 Z" fill="#e0e0e0"/>
<!-- render -->
<rect x="1579.5" y="432" width="15" height="11" rx="1" fill="none" stroke="#e0e0e0" stroke-width="1.4"/>
<path d="M1583 430 L1586 427.5 L1589 430" fill="none" stroke="#e0e0e0" stroke-width="1.1"/>
<path d="M1581.5 436 H1590 M1581.5 439 H1590" stroke="#bdbdbd" stroke-width="1"/>
<!-- output -->
<rect x="1579" y="459" width="16" height="5" fill="#e0e0e0"/>
<rect x="1581.5" y="464" width="11" height="8" fill="none" stroke="#e0e0e0" stroke-width="1.3"/>
<path d="M1585 470.5 L1587 467 L1589 470.5 Z" fill="#bdbdbd"/>
<!-- view layer -->
<rect x="1582" y="486" width="13" height="11" fill="none" stroke="#e0e0e0" stroke-width="1.3"/>
<path d="M1580 489 V499 H1592 M1578.5 491 V501 H1590" fill="none" stroke="#a0a0a0" stroke-width="0.9"/>
<path d="M1584 495.5 L1588 490.5 L1593 495.5 Z" fill="#e0e0e0"/>
<!-- scene -->
<path d="M1578.5 528 L1583.5 515.5 L1585.5 528 Z" fill="#e0e0e0"/>
<circle cx="1590.5" cy="516" r="2.2" fill="#e0e0e0"/>
<circle cx="1588.5" cy="524.5" r="3.6" fill="#2a2a2a" stroke="#e0e0e0" stroke-width="1.2"/>
<!-- world -->
<circle cx="1586.5" cy="549" r="6.5" fill="#c04a58"/>
<path d="M1582 545 C1584 547 1586 545 1588 547 C1589 549 1586 551 1588 553 M1590 543.5 C1591 546 1593 546 1593 548" fill="none" stroke="#4a1a22" stroke-width="1.4"/>
<path d="M1579.5 553 C1582 557 1591 557 1594 553" fill="none" stroke="#e06070" stroke-width="1"/>
<!-- object -->
<path d="M1579.5 580 V577.5 H1582 M1591 577.5 H1593.5 V580 M1593.5 588.5 V591 H1591 M1582 591 H1579.5 V588.5" fill="none" stroke="#c8c8c8" stroke-width="1"/>
<rect x="1581" y="579" width="11" height="10.5" fill="#e89a3c"/>
<!-- modifiers -->
<path d="M1579 619 L1587 611 M1587.5 605.5 C1585 608 1585.5 611.5 1588.5 612.5 C1591 613.5 1594 611 1593.5 607.5 L1591 609.5 L1589 607.5 L1591 605 C1589.5 604.5 1588.5 604.8 1587.5 605.5 Z" fill="#7aa3e0" stroke="#7aa3e0" stroke-width="2.3" stroke-linecap="round"/>
<!-- particles -->
<circle cx="1581" cy="634.5" r="2.5" fill="#8fb0e0"/><circle cx="1591.5" cy="645" r="2.3" fill="#8fb0e0"/>
<path d="M1581 634.5 L1591.5 645 M1581 634.5 H1593 M1581 634.5 V645" stroke="#8fb0e0" stroke-width="1.1"/>
<circle cx="1581" cy="645" r="1.8" fill="#8fb0e0"/>
<!-- physics -->
<path d="M1591 661 A 7 7 0 1 0 1593 670" fill="none" stroke="#8fb0e0" stroke-width="1.5"/>
<circle cx="1586" cy="667.5" r="2.5" fill="#8fb0e0"/>
<circle cx="1591.5" cy="662" r="2" fill="#bcd0f0"/>
<!-- constraints -->
<path d="M1580 700 C1578 696 1581 690 1586 689 L1592 688 C1594 688 1595 690 1594 692 L1591 697 C1589 701 1583 703 1580 700 Z" fill="none" stroke="#8fb0e0" stroke-width="1.4"/>
<circle cx="1584" cy="697.5" r="2.6" fill="none" stroke="#8fb0e0" stroke-width="1.4"/>
<!-- data -->
<path d="M1579.5 716 H1593.5 L1586.5 728 Z" fill="none" stroke="#3dcc7a" stroke-width="1.3"/>
<rect x="1577.5" y="714" width="4" height="4" fill="#2a2a2a" stroke="#3dcc7a" stroke-width="1"/>
<rect x="1591.5" y="714" width="4" height="4" fill="#2a2a2a" stroke="#3dcc7a" stroke-width="1"/>
<rect x="1584.5" y="726" width="4" height="4" fill="#2a2a2a" stroke="#3dcc7a" stroke-width="1"/>
<!-- material -->
<circle cx="1586.5" cy="750" r="7" fill="#e8707a"/>
<path d="M1586.5 750 L1586.5 743 A 7 7 0 0 1 1593.5 750 Z M1586.5 750 L1580 753 A 7 7 0 0 0 1586.5 757 Z" fill="#2a1a1a"/>
<!-- texture -->
<rect x="1579.5" y="779.5" width="14" height="14" fill="#e07a88"/>
<path d="M1579.5 779.5 h2.8 v2.8 h-2.8z M1585.1 779.5 h2.8 v2.8 h-2.8z M1590.7 779.5 h2.8 v2.8 h-2.8z M1582.3 782.3 h2.8 v2.8 h-2.8z M1587.9 782.3 h2.8 v2.8 h-2.8z M1579.5 785.1 h2.8 v2.8 h-2.8z M1585.1 785.1 h2.8 v2.8 h-2.8z M1590.7 785.1 h2.8 v2.8 h-2.8z M1582.3 787.9 h2.8 v2.8 h-2.8z M1587.9 787.9 h2.8 v2.8 h-2.8z M1579.5 790.7 h2.8 v2.8 h-2.8z M1585.1 790.7 h2.8 v2.8 h-2.8z M1590.7 790.7 h2.8 v2.8 h-2.8z" fill="#4a1a22"/>
</svg>
<div class="a" style="left:1px;top:968.5px;width:848px;height:77.5px;background:#2b2b2b;border-radius:6px 0 0 0"></div>
<div class="a" style="left:206px;top:995px;width:643.00px;height:22.00px;background:#2b2b2b;"></div>
<div class="a" style="left:206px;top:1017px;width:643.00px;height:29.00px;background:#393939;"></div>
<div class="a" style="left:234px;top:1017px;width:1.00px;height:29.00px;background:#333333;"></div>
<div class="a" style="left:261px;top:1017px;width:1.00px;height:29.00px;background:#2c2c2c;"></div>
<div class="a" style="left:289px;top:1017px;width:1.00px;height:29.00px;background:#333333;"></div>
<div class="a" style="left:316px;top:1017px;width:1.00px;height:29.00px;background:#2c2c2c;"></div>
<div class="a" style="left:343px;top:1017px;width:1.00px;height:29.00px;background:#333333;"></div>
<div class="a" style="left:370px;top:1017px;width:1.00px;height:29.00px;background:#2c2c2c;"></div>
<div class="a" style="left:398px;top:1017px;width:1.00px;height:29.00px;background:#333333;"></div>
<div class="a" style="left:425px;top:1017px;width:1.00px;height:29.00px;background:#2c2c2c;"></div>
<div class="a" style="left:452px;top:1017px;width:1.00px;height:29.00px;background:#333333;"></div>
<div class="a" style="left:479px;top:1017px;width:1.00px;height:29.00px;background:#2c2c2c;"></div>
<div class="a" style="left:506px;top:1017px;width:1.00px;height:29.00px;background:#333333;"></div>
<div class="a" style="left:534px;top:1017px;width:1.00px;height:29.00px;background:#2c2c2c;"></div>
<div class="a" style="left:561px;top:1017px;width:1.00px;height:29.00px;background:#333333;"></div>
<div class="a" style="left:588px;top:1017px;width:1.00px;height:29.00px;background:#2c2c2c;"></div>
<div class="a" style="left:615px;top:1017px;width:1.00px;height:29.00px;background:#333333;"></div>
<div class="a" style="left:643px;top:1017px;width:1.00px;height:29.00px;background:#2c2c2c;"></div>
<div class="a" style="left:670px;top:1017px;width:1.00px;height:29.00px;background:#333333;"></div>
<div class="a" style="left:697px;top:1017px;width:1.00px;height:29.00px;background:#2c2c2c;"></div>
<div class="a" style="left:724px;top:1017px;width:1.00px;height:29.00px;background:#333333;"></div>
<div class="a" style="left:751px;top:1017px;width:1.00px;height:29.00px;background:#2c2c2c;"></div>
<div class="a" style="left:779px;top:1017px;width:1.00px;height:29.00px;background:#333333;"></div>
<div class="a" style="left:806px;top:1017px;width:1.00px;height:29.00px;background:#2c2c2c;"></div>
<div class="a" style="left:833px;top:1017px;width:1.00px;height:29.00px;background:#333333;"></div>
<div class="a" style="left:207px;top:1021.5px;width:642.00px;height:2.00px;background:#4f6d9c;"></div>
<div class="a" style="left:261px;top:1037.5px;width:588.00px;height:6.00px;background:#575757;border-radius:3px"></div>
<div class="a" style="left:207px;top:1015px;width:1.00px;height:31.00px;background:#4772b3;"></div>
<svg class="a" style="left:210px;top:1019px" width="12" height="8"><ellipse cx="5.7" cy="3.7" rx="4" ry="2.4" fill="#3a3a3a" stroke="#e0e0e0" stroke-width="1.3"/></svg>
<div class="a" style="left:206.8px;top:997px;width:18.20px;height:18.60px;background:#4772b3;border-radius:0 5px 5px 0"></div>
<div class="t" style="left:209.5px;top:999.71px;font-size:11.8px;transform:scaleX(0.949);transform-origin:0 0;color:#ffffff;">1</div>
<div class="t" style="left:255.2px;top:999.71px;font-size:11.8px;transform:scaleX(0.949);transform-origin:0 0;color:#cfcfcf;">10</div>
<div class="t" style="left:309.6px;top:999.71px;font-size:11.8px;transform:scaleX(0.949);transform-origin:0 0;color:#cfcfcf;">20</div>
<div class="t" style="left:364.1px;top:999.71px;font-size:11.8px;transform:scaleX(0.949);transform-origin:0 0;color:#cfcfcf;">30</div>
<div class="t" style="left:418.6px;top:999.71px;font-size:11.8px;transform:scaleX(0.949);transform-origin:0 0;color:#cfcfcf;">40</div>
<div class="t" style="left:473.0px;top:999.71px;font-size:11.8px;transform:scaleX(0.949);transform-origin:0 0;color:#cfcfcf;">50</div>
<div class="t" style="left:527.4px;top:999.71px;font-size:11.8px;transform:scaleX(0.949);transform-origin:0 0;color:#cfcfcf;">60</div>
<div class="t" style="left:581.9px;top:999.71px;font-size:11.8px;transform:scaleX(0.949);transform-origin:0 0;color:#cfcfcf;">70</div>
<div class="t" style="left:636.3px;top:999.71px;font-size:11.8px;transform:scaleX(0.949);transform-origin:0 0;color:#cfcfcf;">80</div>
<div class="t" style="left:690.8px;top:999.71px;font-size:11.8px;transform:scaleX(0.949);transform-origin:0 0;color:#cfcfcf;">90</div>
<div class="t" style="left:742.2px;top:999.71px;font-size:11.8px;transform:scaleX(0.949);transform-origin:0 0;color:#cfcfcf;">100</div>
<div class="t" style="left:796.6px;top:999.71px;font-size:11.8px;transform:scaleX(0.949);transform-origin:0 0;color:#cfcfcf;">110</div>
<div class="a" style="left:1px;top:994px;width:204px;height:52px;background:#2b2b2b;"></div>
<div class="a" style="left:3px;top:998px;width:201.00px;height:16.00px;background:#1f1f1f;border-radius:3px"></div>
<svg class="a" style="left:5px;top:999px" width="14" height="14"><circle cx="8.5" cy="5.5" r="3.8" fill="none" stroke="#d0d0d0" stroke-width="1.3"/><path d="M5.7 8.3 L2 12" stroke="#d0d0d0" stroke-width="1.5"/></svg>
<div class="a" style="left:9px;top:973px;width:30.00px;height:19.50px;background:#333333;border-radius:4px"></div>
<div class="t" style="left:51px;top:976.11px;font-size:11.8px;transform:scaleX(0.949);transform-origin:0 0;color:#dedede;">View</div>
<div class="t" style="left:90.5px;top:976.11px;font-size:11.8px;transform:scaleX(0.949);transform-origin:0 0;color:#dedede;">Select</div>
<div class="t" style="left:136px;top:976.11px;font-size:11.8px;transform:scaleX(0.949);transform-origin:0 0;color:#dedede;">Marker</div>
<div class="t" style="left:185.5px;top:976.11px;font-size:11.8px;transform:scaleX(0.949);transform-origin:0 0;color:#dedede;">Channel</div>
<div class="t" style="left:239.5px;top:976.11px;font-size:11.8px;transform:scaleX(0.949);transform-origin:0 0;color:#dedede;">Key</div>
<div class="a" style="left:273px;top:973.5px;width:86.50px;height:19.00px;background:#505050;border-radius:4px 0 0 4px"></div>
<div class="a" style="left:360.5px;top:973.5px;width:19.50px;height:19.00px;background:#3d4f69;border-radius:0 4px 4px 0"></div>
<div class="t" style="left:299.5px;top:976.11px;font-size:11.8px;transform:scaleX(0.949);transform-origin:0 0;color:#e0e0e0;">Normalize</div>
<div class="a" style="left:1221px;top:968px;width:347.00px;height:78.00px;background:#2b2b2b;"></div>
<div class="a" style="left:1221px;top:1017px;width:347.00px;height:29.00px;background:#393939;"></div>
<div class="a" style="left:1242px;top:1017px;width:1.00px;height:29.00px;background:#2c2c2c;"></div>
<div class="a" style="left:1269px;top:1017px;width:1.00px;height:29.00px;background:#333333;"></div>
<div class="a" style="left:1296px;top:1017px;width:1.00px;height:29.00px;background:#2c2c2c;"></div>
<div class="a" style="left:1323px;top:1017px;width:1.00px;height:29.00px;background:#333333;"></div>
<div class="a" style="left:1350px;top:1017px;width:1.00px;height:29.00px;background:#2c2c2c;"></div>
<div class="a" style="left:1378px;top:1017px;width:1.00px;height:29.00px;background:#333333;"></div>
<div class="a" style="left:1405px;top:1017px;width:1.00px;height:29.00px;background:#2c2c2c;"></div>
<div class="a" style="left:1432px;top:1017px;width:1.00px;height:29.00px;background:#333333;"></div>
<div class="a" style="left:1459px;top:1017px;width:1.00px;height:29.00px;background:#2c2c2c;"></div>
<div class="a" style="left:1487px;top:1017px;width:1.00px;height:29.00px;background:#333333;"></div>
<div class="a" style="left:1514px;top:1017px;width:1.00px;height:29.00px;background:#2c2c2c;"></div>
<div class="a" style="left:1541px;top:1017px;width:1.00px;height:29.00px;background:#333333;"></div>
<div class="a" style="left:1221px;top:1021.5px;width:341.00px;height:2.00px;background:#4f6d9c;"></div>
<div class="a" style="left:1221px;top:1037.5px;width:289.00px;height:6.00px;background:#575757;border-radius:3px"></div>
<div class="t" style="left:1231.5px;top:1000.11px;font-size:11.8px;transform:scaleX(0.949);transform-origin:0 0;color:#cfcfcf;">190</div>
<div class="t" style="left:1286.0px;top:1000.11px;font-size:11.8px;transform:scaleX(0.949);transform-origin:0 0;color:#cfcfcf;">200</div>
<div class="t" style="left:1340.4px;top:1000.11px;font-size:11.8px;transform:scaleX(0.949);transform-origin:0 0;color:#cfcfcf;">210</div>
<div class="t" style="left:1394.8px;top:1000.11px;font-size:11.8px;transform:scaleX(0.949);transform-origin:0 0;color:#cfcfcf;">220</div>
<div class="t" style="left:1449.3px;top:1000.11px;font-size:11.8px;transform:scaleX(0.949);transform-origin:0 0;color:#cfcfcf;">230</div>
<div class="t" style="left:1503.8px;top:1000.11px;font-size:11.8px;transform:scaleX(0.949);transform-origin:0 0;color:#cfcfcf;">240</div>
<div class="a" style="left:1568px;top:968px;width:32.00px;height:78.00px;background:#232323;"></div>
<div class="a" style="left:0px;top:1046px;width:849.00px;height:22.00px;background:#232323;"></div>
<div class="a" style="left:1221px;top:1046px;width:379.00px;height:22.00px;background:#232323;"></div>
<div class="t" style="left:33.5px;top:1051.11px;font-size:11.8px;transform:scaleX(0.949);transform-origin:0 0;color:#bdbdbd;">Select</div>
<div class="t" style="left:99px;top:1051.11px;font-size:11.8px;transform:scaleX(0.949);transform-origin:0 0;color:#bdbdbd;">Box Select</div>
<div class="t" style="left:266.7px;top:1051.11px;font-size:11.8px;transform:scaleX(0.949);transform-origin:0 0;color:#bdbdbd;">Rotate View</div>
<div class="t" style="left:501px;top:1051.11px;font-size:11.8px;transform:scaleX(0.949);transform-origin:0 0;color:#bdbdbd;">Object Context Menu</div>
<div class="t" style="left:1325.5px;top:1051.41px;font-size:11.8px;transform:scaleX(0.949);transform-origin:0 0;color:#bdbdbd;">Scene Collection | cranium | Verts:3,102 | Faces:2,741</div>
<div class="a" style="left:62.5px;top:939.7px;width:157.80px;height:22.50px;background:#2a2a2a;border-radius:4px"></div>
<svg class="a" style="left:70px;top:947px" width="8" height="9"><path d="M1.5 1 L6.5 4.5 L1.5 8 Z" fill="#a0a0a0"/></svg>
<div class="t" style="left:83.8px;top:943.95px;font-size:12.2px;color:#cfcfcf;">Clear Rotation</div>
<!-- right timeline header -->
<div class="a" style="left:1232px;top:974px;width:17.60px;height:17.50px;background:#4772b3;border-radius:4px 0 0 4px"></div>
<div class="a" style="left:1250.2px;top:974px;width:18.40px;height:17.50px;background:#4a4a4a;"></div>
<div class="a" style="left:1269.2px;top:974px;width:19.80px;height:17.50px;background:#4a4a4a;border-radius:0 4px 4px 0"></div>
<div class="a" style="left:1296px;top:974px;width:17.60px;height:17.50px;background:#313131;border-radius:4px"></div>
<div class="a" style="left:1320.7px;top:974px;width:29.60px;height:17.50px;background:#2e2e2e;border-radius:4px"></div>
<div class="a" style="left:1356.8px;top:974px;width:30.70px;height:17.50px;background:#2e2e2e;border-radius:4px"></div>
<div class="a" style="left:1393.2px;top:974px;width:111.30px;height:17.50px;background:#2e2e2e;border-radius:4px"></div>
<div class="a" style="left:1510.7px;top:974px;width:18.00px;height:17.50px;background:#555555;border-radius:4px 0 0 4px"></div>
<div class="a" style="left:1529px;top:974px;width:32.70px;height:17.50px;background:#2e2e2e;border-radius:0 4px 4px 0"></div>
<div class="t" style="left:1400.5px;top:976.41px;font-size:11.8px;transform:scaleX(0.949);transform-origin:0 0;color:#dcdcdc;">Nearest Frame</div>
<svg class="a" style="left:1230px;top:972px" width="335" height="22" viewBox="1230 972 335 22">
<path d="M1235.5 977 L1247 982 L1242 983.5 L1239.5 988.5 Z" fill="#f4f4f4"/>
<path d="M1253 979 V976.5 H1255.5 M1262.5 976.5 H1265 V979 M1265 986.5 V989 H1262.5 M1255.5 989 H1253 V986.5" fill="none" stroke="#e0e0e0" stroke-width="1.2"/>
<rect x="1256" y="979.5" width="6" height="6.5" fill="none" stroke="#9a9a9a" stroke-width="0.9" stroke-dasharray="1.3 1.1"/>
<path d="M1279 975.5 L1287 989.5 H1271 Z" fill="#e6e6e6"/>
<path d="M1279 980 V985" stroke="#4a4a4a" stroke-width="1.8"/><circle cx="1279" cy="987.2" r="0.9" fill="#4a4a4a"/>
<rect x="1298.5" y="976.5" width="11" height="10" fill="none" stroke="#6a6a6a" stroke-width="1"/>
<path d="M1300 985 L1308 978" stroke="#6a6a6a" stroke-width="1"/>
<path d="M1324.5 976.5 H1338 L1333 983 V990 L1330 988.5 V983 Z" fill="none" stroke="#e6e6e6" stroke-width="1.3"/>
<path d="M1341.5 981 L1344.3 983.8 L1347.1 981" fill="none" stroke="#d0d0d0" stroke-width="1.1"/>
<path d="M1361 979.5 V977 H1363.5 M1370 977 H1372.5 V979.5 M1372.5 986.5 V989 H1370 M1363.5 989 H1361 V986.5" fill="none" stroke="#d8d8d8" stroke-width="1.1"/>
<circle cx="1366.7" cy="983" r="1.8" fill="#e6e6e6"/>
<path d="M1377 981 L1379.8 983.8 L1382.6 981" fill="none" stroke="#d0d0d0" stroke-width="1.1"/>
<path d="M1494.5 981 L1497.3 983.8 L1500.1 981" fill="none" stroke="#d0d0d0" stroke-width="1.2"/>
<circle cx="1519.7" cy="982.7" r="5" fill="none" stroke="#6e6e6e" stroke-width="1"/>
<circle cx="1519.7" cy="982.7" r="1.6" fill="#d8d8d8"/>
<path d="M1534 990 C1536 990 1537 977 1539.5 977 C1542 977 1543 990 1545 990" fill="none" stroke="#cfcfcf" stroke-width="1.1"/>
<path d="M1550.5 981 L1553.3 983.8 L1556.1 981" fill="none" stroke="#d0d0d0" stroke-width="1.1"/>
</svg>
<svg class="a" style="left:1560px;top:1010px" width="10" height="36"><path d="M7.5 5 L4.5 8 L7.5 11" fill="none" stroke="#9a9a9a" stroke-width="1"/><rect x="1" y="17" width="6" height="17" rx="3" fill="#5a5a5a"/></svg>
<!-- timeline icons -->
<svg class="a" style="left:0;top:968px" width="400" height="100" viewBox="0 968 400 100">
<path d="M13 981 L15.5 976.5 L18 981 Z" fill="#e0e0e0"/>
<path d="M16.5 983 H21 L16.5 989.5 H21" fill="none" stroke="#e0e0e0" stroke-width="1.3"/>
<rect x="22.5" y="986" width="3.5" height="4" fill="#e0e0e0"/>
<path d="M29.5 981 L32.3 983.8 L35.1 981" fill="none" stroke="#d0d0d0" stroke-width="1.1"/>
<path d="M277.5 979.5 V977 H280.5 M287 977 H290 V979.5 M290 987 V989.5 H287 M280.5 989.5 H277.5 V987" fill="none" stroke="#cfcfcf" stroke-width="1"/>
<path d="M279 979 L283 987.5 L286.5 980.5 L289 987" fill="none" stroke="#dcdcdc" stroke-width="1.2"/>
<path d="M365 980.5 A 5.5 5.5 0 0 1 375.3 979.5 M375.5 985.5 A 5.5 5.5 0 0 1 365.2 986.5" fill="none" stroke="#9cc0f0" stroke-width="1.4"/>
<path d="M373 977.5 L376.5 980.5 L377.5 976.5 Z M367.5 988.5 L364 985.5 L363 989.5 Z" fill="#9cc0f0"/>
<!-- mouse icons -->
<g fill="none" stroke="#bdbdbd" stroke-width="1">
<rect x="12.5" y="1050.5" width="9" height="14" rx="4"/>
<rect x="76.5" y="1050.5" width="9" height="14" rx="4"/>
<rect x="246.5" y="1050.5" width="9" height="14" rx="4"/>
<path d="M88 1051 V1055 M90 1050 V1056"/>
</g>
<path d="M13 1055.5 H17 V1051 C15 1051 13 1052 13 1055.5 Z" fill="#bdbdbd"/>
<path d="M77 1055.5 H81 V1051 C79 1051 77 1052 77 1055.5 Z" fill="#bdbdbd"/>
<rect x="250" y="1052" width="2" height="4" fill="#bdbdbd"/>
</svg>
<svg class="a" style="left:476px;top:1048px" width="20" height="20" viewBox="476 1048 20 20">
<rect x="479.5" y="1050.5" width="9" height="14" rx="4" fill="none" stroke="#bdbdbd" stroke-width="1"/>
<path d="M484 1051 V1055.5 H488 C488 1052 486 1051 484 1051 Z" fill="#bdbdbd"/>
</svg>
</body></html>
